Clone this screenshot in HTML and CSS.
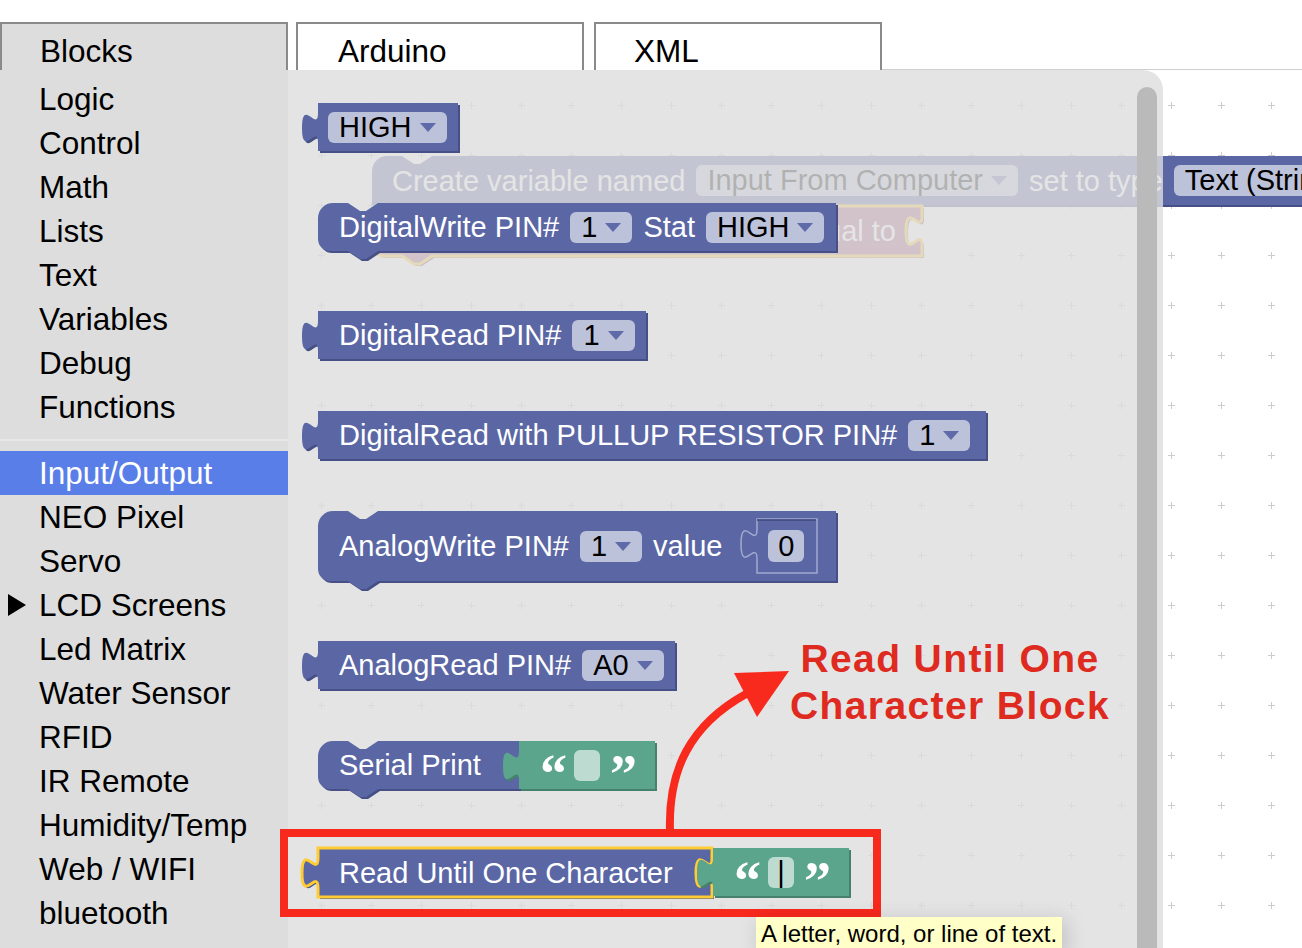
FILE: index.html
```html
<!DOCTYPE html>
<html>
<head>
<meta charset="utf-8">
<title>Blocks</title>
<link rel="stylesheet" href="styles.css">
</head>
<body>
<div class="app">
  <div class="tabbar">
    <div class="tab tab-active">Blocks</div>
    <div class="tab tab-arduino">Arduino</div>
    <div class="tab tab-xml">XML</div>
    <div class="tab-fill"></div>
  </div>
  <div class="main">
    <nav class="toolbox">
      <div class="cat"><span class="caret"></span>Logic</div>
      <div class="cat"><span class="caret"></span>Control</div>
      <div class="cat"><span class="caret"></span>Math</div>
      <div class="cat"><span class="caret"></span>Lists</div>
      <div class="cat"><span class="caret"></span>Text</div>
      <div class="cat"><span class="caret"></span>Variables</div>
      <div class="cat"><span class="caret"></span>Debug</div>
      <div class="cat"><span class="caret"></span>Functions</div>
      <div class="sep"></div>
      <div class="cat sel"><span class="caret"></span>Input/Output</div>
      <div class="cat"><span class="caret"></span>NEO Pixel</div>
      <div class="cat"><span class="caret"></span>Servo</div>
      <div class="cat"><span class="caret"><svg width="18" height="22" viewBox="0 0 18 22"><path d="M0 0L18 11L0 22Z" fill="#000"/></svg></span>LCD Screens</div>
      <div class="cat"><span class="caret"></span>Led Matrix</div>
      <div class="cat"><span class="caret"></span>Water Sensor</div>
      <div class="cat"><span class="caret"></span>RFID</div>
      <div class="cat"><span class="caret"></span>IR Remote</div>
      <div class="cat"><span class="caret"></span>Humidity/Temp</div>
      <div class="cat"><span class="caret"></span>Web / WIFI</div>
      <div class="cat"><span class="caret"></span>bluetooth</div>
    </nav>

    <div class="workspace">
      <svg class="grid" width="1014" height="878">
        <defs>
          <pattern id="gridpat" width="50" height="50" patternUnits="userSpaceOnUse">
            <path d="M30 35.5h7M33.5 32v7" stroke="#cccccc" stroke-width="1"/>
          </pattern>
        </defs>
        <rect width="1014" height="878" fill="url(#gridpat)"/>
      </svg>

      <!-- workspace blocks (under the flyout) -->
      <div class="blk ws-var">
        <svg class="shape" width="1000" height="49"><path class="dk" transform="translate(2 2)" d="M0,15 A15,15 0 0 1 15,0 H30 l12,8 l6,0 l12,-8 H1000 V49 H0 Z"/><path class="pf" d="M0,15 A15,15 0 0 1 15,0 H30 l12,8 l6,0 l12,-8 H1000 V49 H0 Z"/></svg>
        <span class="lbl">Create variable named</span>
        <span class="dd">Input From Computer<svg class="arr" width="16" height="9" viewBox="0 0 16 9"><path d="M0 0H16L8 9Z"/></svg></span>
        <span class="lbl">set to type</span>
        <span class="dd">Text (String)<svg class="arr" width="16" height="9" viewBox="0 0 16 9"><path d="M0 0H16L8 9Z"/></svg></span>
      </div>
      <div class="blk ws-set">
        <svg class="shape" width="550" height="50"><path class="dk" transform="translate(2 2)" d="M0,15 A15,15 0 0 1 15,0 H30 l12,8 l6,0 l12,-8 H550 v10 c0,20 -16,-16 -16,15 s16,-5 16,15 V50 H60 l-12,8 l-6,0 l-12,-8 H12 A12,12 0 0 1 0,38 Z"/><path class="pf sel" d="M0,15 A15,15 0 0 1 15,0 H30 l12,8 l6,0 l12,-8 H550 v10 c0,20 -16,-16 -16,15 s16,-5 16,15 V50 H60 l-12,8 l-6,0 l-12,-8 H12 A12,12 0 0 1 0,38 Z"/></svg>
        <span class="lbl push">equal to</span>
      </div>

      <div class="flyout">
        <div class="blk b-high">
          <svg class="shape" width="140" height="48"><path class="dk" transform="translate(2 2)" d="M0,0 H140 V48 H0 V40 c0,-20 -16,16 -16,-15 s16,5 16,-15 Z"/><path class="pf" d="M0,0 H140 V48 H0 V40 c0,-20 -16,16 -16,-15 s16,5 16,-15 Z"/></svg>
          <span class="dd">HIGH<svg class="arr" width="16" height="9" viewBox="0 0 16 9"><path d="M0 0H16L8 9Z"/></svg></span>
        </div>

        <div class="blk b-dw">
          <svg class="shape" width="518" height="48"><path class="dk" transform="translate(2 2)" d="M0,15 A15,15 0 0 1 15,0 H30 l12,8 l6,0 l12,-8 H518 V48 H60 l-12,8 l-6,0 l-12,-8 H12 A12,12 0 0 1 0,36 Z"/><path class="pf" d="M0,15 A15,15 0 0 1 15,0 H30 l12,8 l6,0 l12,-8 H518 V48 H60 l-12,8 l-6,0 l-12,-8 H12 A12,12 0 0 1 0,36 Z"/></svg>
          <span class="lbl">DigitalWrite PIN#</span>
          <span class="dd">1<svg class="arr" width="16" height="9" viewBox="0 0 16 9"><path d="M0 0H16L8 9Z"/></svg></span>
          <span class="lbl">Stat</span>
          <span class="dd">HIGH<svg class="arr" width="16" height="9" viewBox="0 0 16 9"><path d="M0 0H16L8 9Z"/></svg></span>
        </div>

        <div class="blk b-dr">
          <svg class="shape" width="328" height="48"><path class="dk" transform="translate(2 2)" d="M0,0 H328 V48 H0 V40 c0,-20 -16,16 -16,-15 s16,5 16,-15 Z"/><path class="pf" d="M0,0 H328 V48 H0 V40 c0,-20 -16,16 -16,-15 s16,5 16,-15 Z"/></svg>
          <span class="lbl">DigitalRead PIN#</span>
          <span class="dd">1<svg class="arr" width="16" height="9" viewBox="0 0 16 9"><path d="M0 0H16L8 9Z"/></svg></span>
        </div>

        <div class="blk b-pu">
          <svg class="shape" width="668" height="48"><path class="dk" transform="translate(2 2)" d="M0,0 H668 V48 H0 V40 c0,-20 -16,16 -16,-15 s16,5 16,-15 Z"/><path class="pf" d="M0,0 H668 V48 H0 V40 c0,-20 -16,16 -16,-15 s16,5 16,-15 Z"/></svg>
          <span class="lbl">DigitalRead with PULLUP RESISTOR PIN#</span>
          <span class="dd">1<svg class="arr" width="16" height="9" viewBox="0 0 16 9"><path d="M0 0H16L8 9Z"/></svg></span>
        </div>

        <div class="blk b-aw">
          <svg class="shape" width="518" height="70"><path class="dk" transform="translate(2 2)" d="M0,15 A15,15 0 0 1 15,0 H30 l12,8 l6,0 l12,-8 H518 V70 H60 l-12,8 l-6,0 l-12,-8 H12 A12,12 0 0 1 0,58 Z"/><path class="pf" d="M0,15 A15,15 0 0 1 15,0 H30 l12,8 l6,0 l12,-8 H518 V70 H60 l-12,8 l-6,0 l-12,-8 H12 A12,12 0 0 1 0,58 Z"/></svg>
          <span class="lbl">AnalogWrite PIN#</span>
          <span class="dd">1<svg class="arr" width="16" height="9" viewBox="0 0 16 9"><path d="M0 0H16L8 9Z"/></svg></span>
          <span class="lbl">value</span>
          <span class="socket">
            <svg class="shape" width="76" height="54"><path class="shadowblk" d="M16,0 H76 V54 H16 V40 c0,-20 -16,16 -16,-15 s16,5 16,-15 Z"/><path class="socket-top" d="M16,1 H75"/></svg>
            <span class="num">0</span>
          </span>
        </div>

        <div class="blk b-ar">
          <svg class="shape" width="357" height="48"><path class="dk" transform="translate(2 2)" d="M0,0 H357 V48 H0 V40 c0,-20 -16,16 -16,-15 s16,5 16,-15 Z"/><path class="pf" d="M0,0 H357 V48 H0 V40 c0,-20 -16,16 -16,-15 s16,5 16,-15 Z"/></svg>
          <span class="lbl">AnalogRead PIN#</span>
          <span class="dd">A0<svg class="arr" width="16" height="9" viewBox="0 0 16 9"><path d="M0 0H16L8 9Z"/></svg></span>
        </div>

        <div class="blk cmp b-sp">
          <div class="seg seg-sp">
            <svg class="shape" width="201" height="48"><path class="dk" transform="translate(2 2)" d="M0,15 A15,15 0 0 1 15,0 H30 l12,8 l6,0 l12,-8 H201 V48 H60 l-12,8 l-6,0 l-12,-8 H12 A12,12 0 0 1 0,36 Z"/><path class="pf" d="M0,15 A15,15 0 0 1 15,0 H30 l12,8 l6,0 l12,-8 H201 V48 H60 l-12,8 l-6,0 l-12,-8 H12 A12,12 0 0 1 0,36 Z"/></svg>
            <span class="lbl">Serial Print</span>
          </div>
          <div class="seg seg-str green">
            <svg class="shape" width="136" height="48"><path class="dk" transform="translate(2 2)" d="M0,0 H136 V48 H0 V40 c0,-20 -16,16 -16,-15 s16,5 16,-15 Z"/><path class="pf" d="M0,0 H136 V48 H0 V40 c0,-20 -16,16 -16,-15 s16,5 16,-15 Z"/></svg>
            <span class="q">&#8220;</span>
            <span class="tf"></span>
            <span class="q">&#8221;</span>
          </div>
        </div>

        <div class="blk cmp b-ru">
          <div class="seg seg-ru">
            <svg class="shape" width="394" height="49"><path class="dk" transform="translate(2 2)" d="M0,0 H394 v10 c0,20 -16,-16 -16,15 s16,-5 16,15 V49 H0 V40 c0,-20 -16,16 -16,-15 s16,5 16,-15 Z"/><path class="pf sel" d="M0,0 H394 v10 c0,20 -16,-16 -16,15 s16,-5 16,15 V49 H0 V40 c0,-20 -16,16 -16,-15 s16,5 16,-15 Z"/></svg>
            <span class="lbl">Read Until One Character</span>
          </div>
          <div class="seg seg-str green">
            <svg class="shape" width="136" height="48"><path class="dk" transform="translate(2 2)" d="M0,0 H136 V48 H0 V40 c0,-20 -16,16 -16,-15 s16,5 16,-15 Z"/><path class="pf" d="M0,0 H136 V48 H0 V40 c0,-20 -16,16 -16,-15 s16,5 16,-15 Z"/></svg>
            <span class="q">&#8220;</span>
            <span class="tf">|</span>
            <span class="q">&#8221;</span>
          </div>
        </div>

        <div class="scrollbar"></div>
      </div>
    </div>
  </div>

  <svg class="marks" width="1302" height="948">
    <rect x="284" y="833" width="593" height="80" fill="none" stroke="#f8291d" stroke-width="8"/>
    <path d="M670 831 C668 770 690 725 746 694" fill="none" stroke="#f8291d" stroke-width="8"/>
    <path d="M734 673 L789 671 L757 717 Z" fill="#f8291d"/>
  </svg>
  <div class="note">Read Until One<br>Character Block</div>
  <div class="tooltip">A letter, word, or line of text.</div>
</div>
</body>
</html>
```

FILE: styles.css
```css
html, body {
  margin: 0;
  padding: 0;
  background: #ffffff;
}

body {
  font-family: "Liberation Sans", Arial, Helvetica, sans-serif;
  color: #000;
}

.app {
  position: relative;
  width: 1302px;
  height: 948px;
  overflow: hidden;
  padding-top: 22px;
  box-sizing: border-box;
}

/* ---------- tabs ---------- */
.tabbar {
  display: flex;
  height: 48px;
}

.tab {
  box-sizing: border-box;
  width: 288px;
  height: 48px;
  flex: none;
  border: 2px solid #8a8a8a;
  border-bottom: 0;
  padding: 12px 0 0 38px;
  font-size: 31.5px;
  line-height: 1;
  background: #fff;
}

.tab-active {
  background: #dddddd;
}

.tab-arduino {
  margin-left: 8px;
  padding-left: 40px;
}

.tab-xml {
  margin-left: 10px;
  padding-left: 38px;
}

.tab-fill {
  flex: 1;
  border-bottom: 1px solid #cfcfcf;
  box-sizing: border-box;
}

/* ---------- main ---------- */
.main {
  display: flex;
  height: 878px;
}

.toolbox {
  width: 288px;
  flex: none;
  background: #dddddd;
  padding-top: 7px;
  box-sizing: border-box;
}

.cat {
  display: flex;
  height: 44px;
  line-height: 44px;
  font-size: 31.5px;
  white-space: nowrap;
}

.cat.sel {
  background: #5a7ee8;
  color: #fff;
}

.caret {
  width: 39px;
  flex: none;
  display: flex;
  align-items: center;
}

.caret svg {
  margin-left: 8px;
}

.sep {
  height: 2px;
  margin: 10px 0;
  background: #e7e7e7;
}

/* ---------- workspace ---------- */
.workspace {
  position: relative;
  flex: 1;
  background: #fff;
  overflow: hidden;
}

.grid {
  position: absolute;
  left: 0;
  top: 0;
}

.flyout {
  position: absolute;
  left: 0;
  top: 0;
  width: 875px;
  bottom: 0;
  background: rgba(221, 221, 221, 0.8);
  border-top-right-radius: 20px;
}

.scrollbar {
  position: absolute;
  left: 849px;
  top: 17px;
  width: 20px;
  bottom: 0;
  background: #bababa;
  border-radius: 10px 10px 0 0;
}

/* ---------- blocks ---------- */
.blk {
  position: absolute;
  display: flex;
  align-items: center;
  box-sizing: border-box;
  padding-left: 21px;
  gap: 11px;
  font-size: 29px;
  white-space: nowrap;
}

.shape {
  position: absolute;
  left: 0;
  top: 0;
  overflow: visible;
}

.pf { fill: #5b67a5; }
.dk { fill: #464f86; }
.pf.sel { stroke: #ffcc33; stroke-width: 3; }

.ws-set .pf { fill: #a55b80; }
.ws-set .dk { fill: #844866; }

.green .pf { fill: #5ba58c; }
.green .dk { fill: #46816c; }

.lbl {
  position: relative;
  color: #fff;
  line-height: 34px;
}

.push {
  margin-left: auto;
  margin-right: 26px;
}

.dd {
  position: relative;
  display: flex;
  align-items: center;
  gap: 8px;
  height: 31px;
  padding: 0 11px;
  border-radius: 6px;
  background: #bdc2db;
  color: #000;
  line-height: 31px;
}

.arr {
  fill: #5f6aa8;
  flex: none;
}

.b-high { left: 30px; top: 33px;  width: 140px; height: 48px; padding-left: 10px; }
.b-dw   { left: 30px; top: 133px; width: 518px; height: 48px; }
.b-dr   { left: 30px; top: 241px; width: 328px; height: 48px; }
.b-pu   { left: 30px; top: 341px; width: 668px; height: 48px; }
.b-aw   { left: 30px; top: 441px; width: 518px; height: 70px; }
.b-ar   { left: 30px; top: 571px; width: 357px; height: 48px; }
.b-sp   { left: 30px; top: 671px; }
.b-ru   { left: 30px; top: 778px; }

.ws-var { left: 84px; top: 86px; width: 1000px; height: 49px; padding-left: 20px; }
.ws-set { left: 84px; top: 136px; width: 550px; height: 50px; }

.socket {
  position: relative;
  width: 76px;
  height: 54px;
  margin-left: 8px;
  display: flex;
  align-items: center;
  padding-left: 27px;
  box-sizing: border-box;
}

.shadowblk {
  fill: #5b67a5;
  stroke: #a3a9cf;
  stroke-width: 1.5;
}

.socket-top {
  stroke: #3f477b;
  stroke-width: 1.5;
  fill: none;
}

.num {
  position: relative;
  width: 36px;
  height: 32px;
  border-radius: 6px;
  background: #bdc2db;
  color: #000;
  display: flex;
  align-items: center;
  justify-content: center;
  line-height: 32px;
}

.cmp {
  padding-left: 0;
  gap: 0;
  align-items: flex-start;
}

.seg {
  position: relative;
  display: flex;
  align-items: center;
  box-sizing: border-box;
  height: 48px;
  padding-left: 21px;
}

.seg-sp { width: 201px; }
.seg-ru { width: 395px; height: 49px; }
.seg-str { width: 136px; gap: 10px; }

.q {
  position: relative;
  width: 24px;
  font-family: "Liberation Serif", "Times New Roman", serif;
  font-weight: bold;
  font-size: 54px;
  line-height: 1;
  color: #fff;
  transform: translateY(9px);
}

.tf {
  position: relative;
  width: 26px;
  height: 31px;
  border-radius: 6px;
  background: #bddbd1;
  color: #000;
  display: flex;
  align-items: center;
  justify-content: center;
  line-height: 31px;
}

/* ---------- annotations ---------- */
.marks {
  position: absolute;
  left: 0;
  top: 0;
  pointer-events: none;
}

.note {
  position: absolute;
  left: 780px;
  top: 635px;
  width: 340px;
  text-align: center;
  font-weight: bold;
  font-size: 39px;
  line-height: 47px;
  letter-spacing: 1.4px;
  color: #de2a1f;
}

.tooltip {
  position: absolute;
  left: 756px;
  top: 917px;
  padding: 2px 5px 4px;
  background: #ffffc7;
  font-size: 24px;
  line-height: 30px;
  color: #000;
  box-shadow: 4px 4px 20px 1px rgba(0, 0, 0, 0.15);
  white-space: nowrap;
}
```
